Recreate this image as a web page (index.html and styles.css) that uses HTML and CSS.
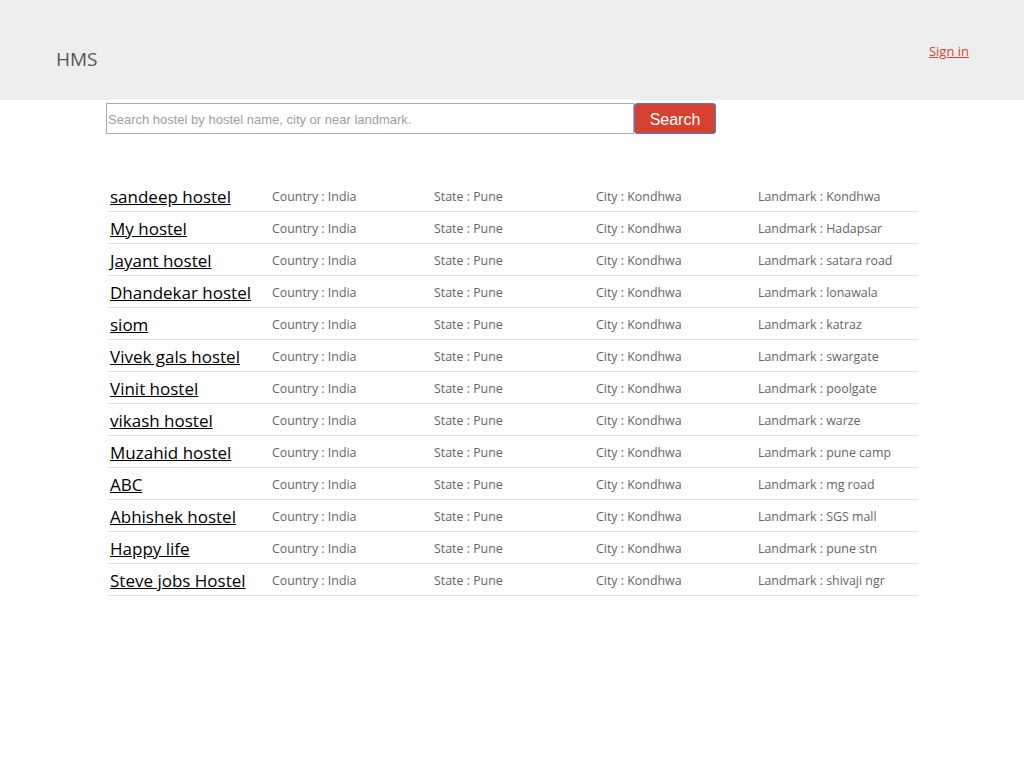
FILE: index.html
```html
<!DOCTYPE html>
<html>
<head>
<meta charset="utf-8">
<title>HMS</title>
<link rel="stylesheet" href="styles.css">
</head>
<body>
<header class="topbar">
  <div class="brand">HMS</div>
  <a class="signin" href="#">Sign in</a>
</header>
<form class="search">
  <input class="search-input" type="text" placeholder="Search hostel by hostel name, city or near landmark.">
  <button class="search-btn" type="button">Search</button>
</form>
<table class="list">
  <tr><td class="name"><a href="#">sandeep hostel</a></td><td>Country : India</td><td>State : Pune</td><td>City : Kondhwa</td><td>Landmark : Kondhwa</td></tr>
  <tr><td class="name"><a href="#">My hostel</a></td><td>Country : India</td><td>State : Pune</td><td>City : Kondhwa</td><td>Landmark : Hadapsar</td></tr>
  <tr><td class="name"><a href="#">Jayant hostel</a></td><td>Country : India</td><td>State : Pune</td><td>City : Kondhwa</td><td>Landmark : satara road</td></tr>
  <tr><td class="name"><a href="#">Dhandekar hostel</a></td><td>Country : India</td><td>State : Pune</td><td>City : Kondhwa</td><td>Landmark : lonawala</td></tr>
  <tr><td class="name"><a href="#">siom</a></td><td>Country : India</td><td>State : Pune</td><td>City : Kondhwa</td><td>Landmark : katraz</td></tr>
  <tr><td class="name"><a href="#">Vivek gals hostel</a></td><td>Country : India</td><td>State : Pune</td><td>City : Kondhwa</td><td>Landmark : swargate</td></tr>
  <tr><td class="name"><a href="#">Vinit hostel</a></td><td>Country : India</td><td>State : Pune</td><td>City : Kondhwa</td><td>Landmark : poolgate</td></tr>
  <tr><td class="name"><a href="#">vikash hostel</a></td><td>Country : India</td><td>State : Pune</td><td>City : Kondhwa</td><td>Landmark : warze</td></tr>
  <tr><td class="name"><a href="#">Muzahid hostel</a></td><td>Country : India</td><td>State : Pune</td><td>City : Kondhwa</td><td>Landmark : pune camp</td></tr>
  <tr><td class="name"><a href="#">ABC</a></td><td>Country : India</td><td>State : Pune</td><td>City : Kondhwa</td><td>Landmark : mg road</td></tr>
  <tr><td class="name"><a href="#">Abhishek hostel</a></td><td>Country : India</td><td>State : Pune</td><td>City : Kondhwa</td><td>Landmark : SGS mall</td></tr>
  <tr><td class="name"><a href="#">Happy life</a></td><td>Country : India</td><td>State : Pune</td><td>City : Kondhwa</td><td>Landmark : pune stn</td></tr>
  <tr><td class="name"><a href="#">Steve jobs Hostel</a></td><td>Country : India</td><td>State : Pune</td><td>City : Kondhwa</td><td>Landmark : shivaji ngr</td></tr>
</table>
</body>
</html>
```

FILE: styles.css
```css
body {
  margin: 0;
  font-family: "Open Sans", "Noto Sans", sans-serif;
  background: #fff;
}
.topbar {
  height: 100px;
  background: #eeeeee;
  display: flex;
  justify-content: space-between;
  align-items: flex-start;
  padding: 0 55px 0 56px;
}
.brand {
  margin-top: 46px;
  font-size: 19px;
  line-height: 26px;
  color: #555;
}
.signin {
  margin-top: 41px;
  font-size: 13px;
  line-height: 20px;
  color: #e4402f;
}
.search {
  display: flex;
  margin: 3px 0 0 106px;
  height: 31px;
}
.search-input {
  box-sizing: border-box;
  width: 528px;
  height: 31px;
  margin: 0;
  border: 1px solid #ababab;
  padding: 2px 1px 0;
  font-family: "Liberation Sans", Arial, sans-serif;
  font-size: 13px;
  outline: none;
}
.search-input::placeholder {
  color: #a0a0a0;
}
.search-btn {
  box-sizing: border-box;
  width: 82px;
  height: 31px;
  margin: 0;
  background: #d8412f;
  border: 1px solid #4a7fd8;
  border-radius: 3px;
  color: #fff;
  font-family: "Liberation Sans", Arial, sans-serif;
  font-size: 16px;
  padding: 2px 0 0;
}
.list {
  margin: 46px 0 0 108px;
  border-collapse: collapse;
  width: 810px;
  table-layout: fixed;
}
.list td {
  width: 158px;
  height: 29px;
  padding: 2px 2px 0;
  border-bottom: 1px solid #e0e0e0;
  font-size: 12.4px;
  line-height: 18px;
  color: #666;
  vertical-align: middle;
  white-space: nowrap;
}
.list td.name {
  font-size: 17px;
  line-height: 22px;
}
.list td.name a {
  color: #000;
  text-decoration: underline;
}
```
